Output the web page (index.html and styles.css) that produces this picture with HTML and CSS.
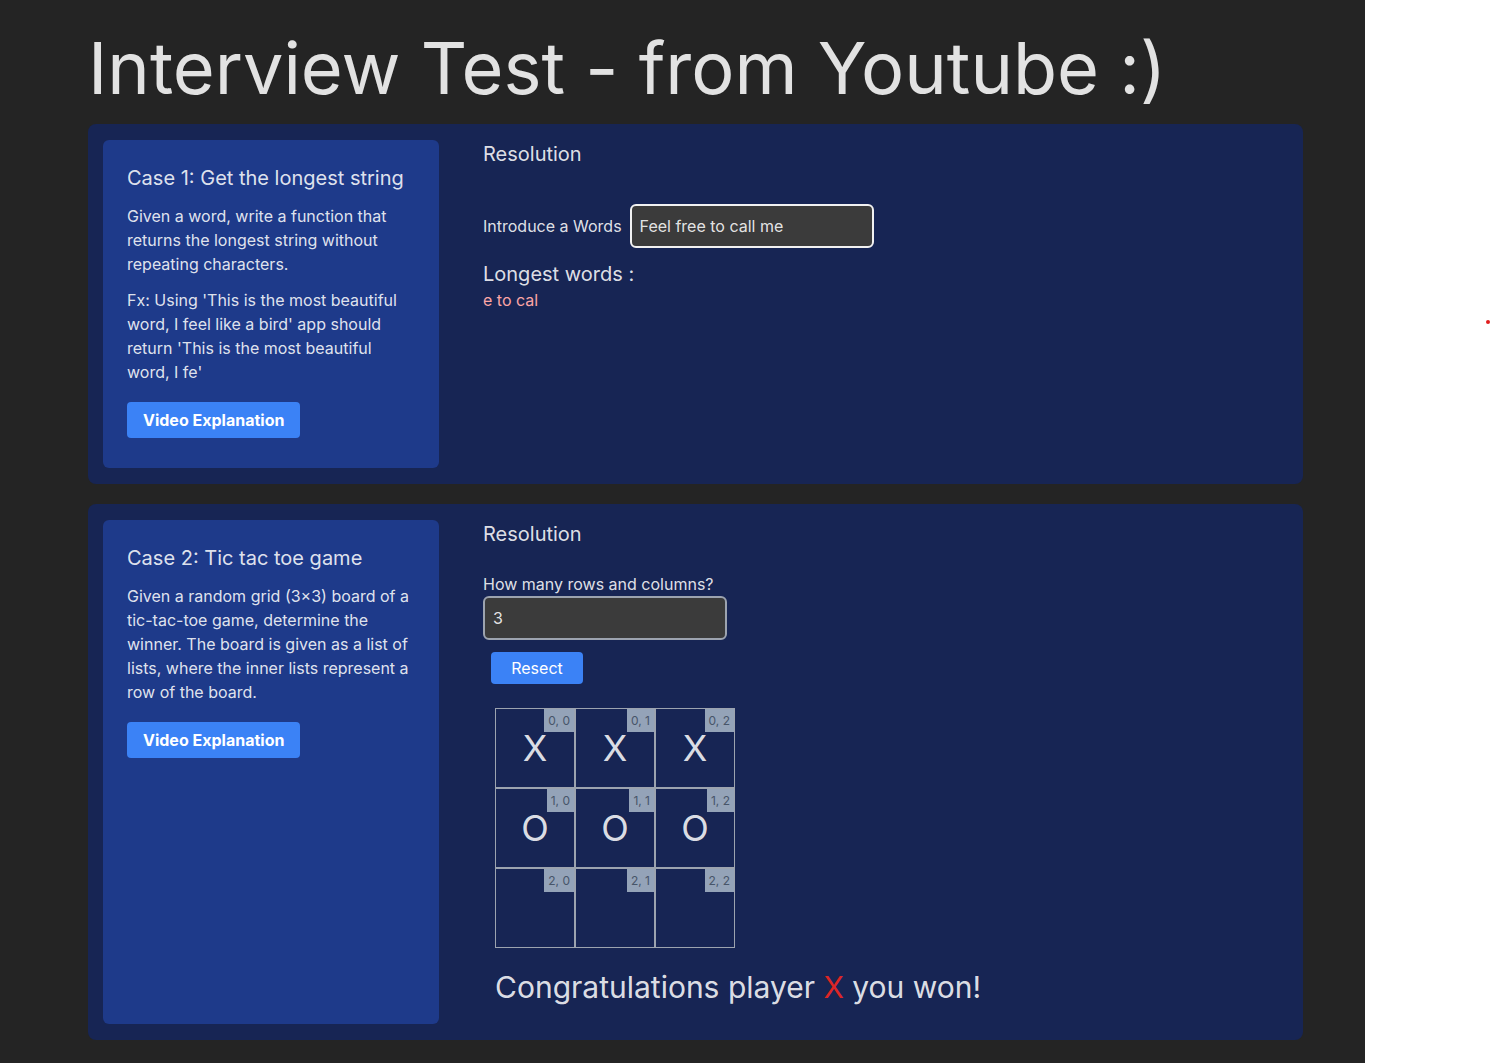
FILE: index.html
```html
<!DOCTYPE html>
<html lang="en">
<head>
<meta charset="UTF-8">
<title>Interview Test</title>
<link rel="stylesheet" href="styles.css">
</head>
<body>
<div class="page">
  <h1 class="title">Interview Test - from Youtube :)</h1>

  <section class="case">
    <div class="info">
      <h2 class="info-title">Case 1: Get the longest string</h2>
      <p class="info-text">Given a word, write a function that returns the longest string without repeating characters.</p>
      <p class="info-text">Fx: Using 'This is the most beautiful word, I feel like a bird' app should return 'This is the most beautiful word, I fe'</p>
      <button class="video-btn">Video Explanation</button>
    </div>
    <div class="resolution">
      <h3 class="res-title">Resolution</h3>
      <div class="word-row">
        <label class="label">Introduce a Words</label>
        <input class="word-input" type="text" value="Feel free to call me">
      </div>
      <div class="longest-title">Longest words :</div>
      <div class="longest-value">e to cal</div>
    </div>
  </section>

  <section class="case">
    <div class="info">
      <h2 class="info-title">Case 2: Tic tac toe game</h2>
      <p class="info-text">Given a random grid (3×3) board of a tic-tac-toe game, determine the winner. The board is given as a list of lists, where the inner lists represent a row of the board.</p>
      <button class="video-btn">Video Explanation</button>
    </div>
    <div class="resolution">
      <h3 class="res-title">Resolution</h3>
      <label class="label rows-label">How many rows and columns?</label>
      <input class="size-input" type="text" value="3">
      <div><button class="reset-btn">Resect</button></div>
      <div class="board">
        <div class="cell"><span class="coord">0, 0</span>X</div>
        <div class="cell"><span class="coord">0, 1</span>X</div>
        <div class="cell"><span class="coord">0, 2</span>X</div>
        <div class="cell"><span class="coord">1, 0</span>O</div>
        <div class="cell"><span class="coord">1, 1</span>O</div>
        <div class="cell"><span class="coord">1, 2</span>O</div>
        <div class="cell"><span class="coord">2, 0</span></div>
        <div class="cell"><span class="coord">2, 1</span></div>
        <div class="cell"><span class="coord">2, 2</span></div>
      </div>
      <p class="winner">Congratulations player <span class="winner-mark">X</span> you won!</p>
    </div>
  </section>
</div>
<div class="dot"></div>
</body>
</html>
```

FILE: styles.css
```css
html {
  background: #ffffff;
}

body {
  margin: 0;
  font-family: Inter, "Liberation Sans", Arial, sans-serif;
  color: rgba(255, 255, 255, 0.87);
  position: relative;
}

.page {
  width: 1365px;
  min-height: 1063px;
  box-sizing: border-box;
  background: #242424;
  padding: 32px 0 24px 88px;
}

.title {
  margin: 0 0 20px;
  font-size: 72px;
  line-height: 72px;
  font-weight: 400;
  color: rgba(255, 255, 255, 0.87);
}

.case {
  width: 1215px;
  box-sizing: border-box;
  background: #172554;
  border-radius: 8px;
  padding: 16px 15px;
  display: flex;
  gap: 44px;
  margin-bottom: 20px;
}

.info {
  width: 336px;
  flex: none;
  box-sizing: border-box;
  background: #1e3a8a;
  border-radius: 6px;
  padding: 24px 24px 30px;
}

.info-title {
  margin: 0 0 12px;
  font-size: 20px;
  line-height: 28px;
  font-weight: 400;
}

.info-text {
  margin: 0 0 12px;
  font-size: 16px;
  line-height: 24px;
}

.video-btn {
  margin-top: 6px;
  height: 36px;
  padding: 0 16px;
  border: none;
  border-radius: 4px;
  background: #3b82f6;
  color: #ffffff;
  font-family: Inter, "Liberation Sans", Arial, sans-serif;
  font-size: 16px;
  font-weight: 700;
  line-height: 36px;
}

.resolution {
  display: flex;
  flex-direction: column;
  align-items: flex-start;
}

.res-title {
  margin: 0;
  font-size: 20px;
  line-height: 28px;
  font-weight: 400;
}

.word-row {
  margin-top: 36px;
  display: flex;
  align-items: center;
  gap: 8px;
}

.label {
  font-size: 16px;
  line-height: 24px;
}

.word-input,
.size-input {
  box-sizing: border-box;
  width: 244px;
  height: 44px;
  padding: 0 8px;
  border-radius: 6px;
  background: #3b3b3b;
  color: rgba(255, 255, 255, 0.87);
  font-family: Inter, "Liberation Sans", Arial, sans-serif;
  font-size: 16px;
  outline: none;
}

.word-input {
  border: 2px solid #f1f1f1;
}

.longest-title {
  margin-top: 12px;
  font-size: 20px;
  line-height: 28px;
}

.longest-value {
  font-size: 16px;
  line-height: 24px;
  color: #fca5a5;
}

.rows-label {
  margin-top: 24px;
}

.size-input {
  border: 2px solid #9ca3af;
}

.reset-btn {
  margin: 12px 0 0 8px;
  width: 92px;
  height: 32px;
  border: none;
  border-radius: 4px;
  background: #3b82f6;
  color: #ffffff;
  font-family: Inter, "Liberation Sans", Arial, sans-serif;
  font-size: 16px;
  line-height: 32px;
  padding: 0;
}

.board {
  margin: 24px 0 0 12px;
  display: grid;
  grid-template-columns: repeat(3, 80px);
  grid-template-rows: repeat(3, 80px);
}

.cell {
  position: relative;
  box-sizing: border-box;
  border: 1px solid #9ca3af;
  display: flex;
  align-items: center;
  justify-content: center;
  font-size: 36px;
  line-height: 40px;
  color: rgba(255, 255, 255, 0.87);
}

.coord {
  position: absolute;
  top: 0;
  right: 0;
  background: #94a3b8;
  color: #475569;
  font-size: 12px;
  line-height: 16px;
  padding: 4px 4px 3px;
}

.winner {
  margin: 21px 0 19px 12px;
  font-size: 30px;
  line-height: 36px;
}

.winner-mark {
  color: #dc2626;
}

.dot {
  position: absolute;
  left: 1486px;
  top: 320px;
  width: 4px;
  height: 4px;
  border-radius: 50%;
  background: #e11d1d;
}
```
